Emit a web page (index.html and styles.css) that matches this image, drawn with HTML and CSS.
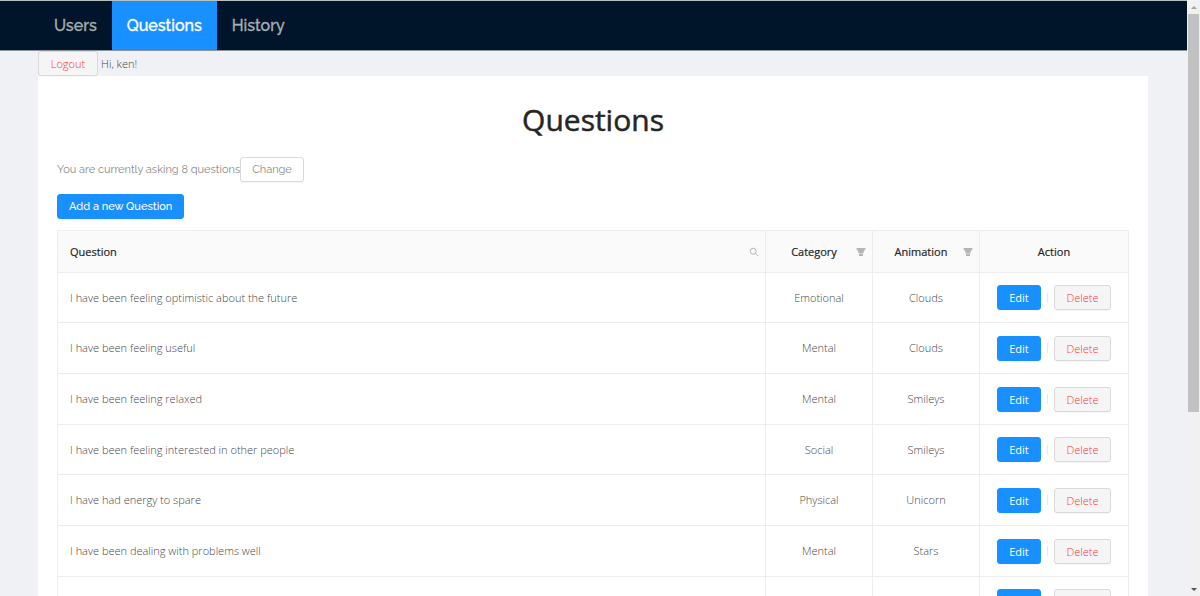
FILE: index.html
```
<!DOCTYPE html>
<html lang="en">
<head>
<meta charset="utf-8">
<title>Questions</title>
<link rel="stylesheet" href="styles.css">
</head>
<body>
<svg class="sprite" aria-hidden="true">
  <symbol id="funnel" viewBox="0 0 10 10"><path d="M.5 1h9v1L7.500 5v1.500h-5V5L.5 2zM3 7h4v2H3z" fill="currentColor"/></symbol>
</svg>
<div class="page">
  <nav class="nav">
    <a class="nav-link" href="#users">Users</a>
    <a class="nav-link active" href="#questions">Questions</a>
    <a class="nav-link" href="#history">History</a>
  </nav>
  <div class="container">
    <div class="account"><button class="btn danger logout">Logout</button><span>Hi, ken!</span></div>
    <main class="card">
      <h1 class="title">Questions</h1>
      <div class="asking"><span>You are currently asking 8 questions</span><button class="btn change">Change</button></div>
      <button class="btn primary add">Add a new Question</button>
      <table class="table">
        <colgroup><col><col class="col-tag"><col class="col-tag"><col class="col-action"></colgroup>
        <thead>
          <tr>
            <th class="text"><div class="head"><span>Question</span><button class="icon" aria-label="Search"><svg viewBox="0 0 10 10" width="10" height="10"><circle cx="4.200" cy="4.200" r="3" fill="none" stroke="currentColor"/><path d="M6.400 6.400 9.200 9.200" stroke="currentColor"/></svg></button></div></th>
            <th><div class="head"><span class="label">Category</span><button class="icon" aria-label="Filter category"><svg width="10" height="10"><use href="#funnel"/></svg></button></div></th>
            <th><div class="head"><span class="label">Animation</span><button class="icon" aria-label="Filter animation"><svg width="10" height="10"><use href="#funnel"/></svg></button></div></th>
            <th>Action</th>
          </tr>
        </thead>
        <tbody>
          <tr><td class="text">I have been feeling optimistic about the future</td><td>Emotional</td><td>Clouds</td><td><div class="actions"><button class="btn primary">Edit</button><i class="divider"></i><button class="btn danger">Delete</button></div></td></tr>
          <tr><td class="text">I have been feeling useful</td><td>Mental</td><td>Clouds</td><td><div class="actions"><button class="btn primary">Edit</button><i class="divider"></i><button class="btn danger">Delete</button></div></td></tr>
          <tr><td class="text">I have been feeling relaxed</td><td>Mental</td><td>Smileys</td><td><div class="actions"><button class="btn primary">Edit</button><i class="divider"></i><button class="btn danger">Delete</button></div></td></tr>
          <tr><td class="text">I have been feeling interested in other people</td><td>Social</td><td>Smileys</td><td><div class="actions"><button class="btn primary">Edit</button><i class="divider"></i><button class="btn danger">Delete</button></div></td></tr>
          <tr><td class="text">I have had energy to spare</td><td>Physical</td><td>Unicorn</td><td><div class="actions"><button class="btn primary">Edit</button><i class="divider"></i><button class="btn danger">Delete</button></div></td></tr>
          <tr><td class="text">I have been dealing with problems well</td><td>Mental</td><td>Stars</td><td><div class="actions"><button class="btn primary">Edit</button><i class="divider"></i><button class="btn danger">Delete</button></div></td></tr>
          <tr><td class="text"></td><td></td><td></td><td><div class="actions"><button class="btn primary" aria-label="Edit"></button><i class="divider"></i><button class="btn danger" aria-label="Delete"></button></div></td></tr>
        </tbody>
      </table>
    </main>
  </div>
</div>
<div class="scrollbar" aria-hidden="true">
  <svg class="arrow up" viewBox="0 0 6 3" width="6" height="3"><path d="M0 3 3 0l3 3z" fill="currentColor"/></svg>
  <div class="track"><div class="thumb"></div></div>
  <svg class="arrow" viewBox="0 0 6 3" width="6" height="3"><path d="M0 0h6L3 3z" fill="currentColor"/></svg>
</div>
</body>
</html>
```
FILE: styles.css
```
* { box-sizing: border-box; }
body {
  margin: 0;
  height: 100vh;
  display: flex;
  overflow: hidden;
  background: #eff1f5;
  color: #484848;
  font: 11px/16px "Open Sans", "Noto Sans", sans-serif;
  font-weight: 300;
}
.sprite { position: absolute; width: 0; height: 0; }
.page { flex: 1; min-width: 0; overflow: hidden; }
.nav {
  display: flex;
  height: 51px;
  padding-left: 39px;
  background: #001529;
  border-top: 1px solid #b9c0c2;
  border-bottom: 1px solid #8b929c;
}
.nav-link {
  padding: 0 15px;
  color: #a6adb4;
  font: 500 16px/50px Raleway, Lato, sans-serif;
  -webkit-text-stroke: 0.3px currentColor;
  text-decoration: none;
}
.nav-link.active { background: #1890ff; color: #fff; }
.container { padding: 0 39px 0 38px; }
.account { display: flex; align-items: center; gap: 3px; }
.btn {
  height: 25px;
  min-width: 44px;
  padding: 0 11px;
  border: 1px solid #d9d9d9;
  border-radius: 3px;
  background: #fff;
  color: #8a8a8a;
  font: inherit;
  line-height: 23px;
  white-space: nowrap;
  box-shadow: 0 1px 1px rgba(0, 0, 0, .03);
}
.btn.danger { min-width: 57px; background: #f5f5f5; color: #f5383b; }
.btn.logout { min-width: 60px; }
.btn.primary { background: #1890ff; border-color: #1890ff; color: #fff; font-weight: 500; }
.card { background: #fff; padding: 24px 19px; }
.title {
  margin: 0 0 17px;
  color: #262626;
  font-size: 30px;
  line-height: 40px;
  font-weight: 500;
  -webkit-text-stroke: 0.5px currentColor;
  text-align: center;
}
.asking { display: flex; align-items: center; margin-bottom: 12px; font-weight: 400; color: #8a8a8a; }
.asking, .btn.add { font-family: Raleway, Lato, sans-serif; font-size: 11px; }
.btn.add { display: block; margin-bottom: 11px; }
.table {
  width: 100%;
  table-layout: fixed;
  border-collapse: collapse;
}
.col-tag { width: 107px; }
.col-action { width: 149px; }
.table th, .table td {
  padding: 0 12px;
  border: 1px solid #ededed;
  text-align: center;
}
.table th { height: 42px; background: #fafafa; color: #262626; font-weight: 500; -webkit-text-stroke: 0.2px currentColor; }
.table tbody tr { height: 51px; }
.table tbody tr:nth-child(3n+1) { height: 50px; }
.table .text { text-align: left; }
.head { display: flex; align-items: center; justify-content: space-between; margin-right: -6px; }
.head .label { flex: 1; padding-right: 6px; }
.icon { display: flex; padding: 0; border: 0; background: none; color: #b5b5b5; }
.actions { display: flex; align-items: center; justify-content: center; }
.divider { width: 1px; height: 10px; margin: 0 6px; background: #e8e8e8; }
.scrollbar {
  display: flex;
  flex-direction: column;
  align-items: center;
  width: 13px;
  padding: 6px 0 5px;
  background: #f1f1f1;
  color: #505050;
}
.up { color: #a3a3a3; }
.track { flex: 1; width: 11px; margin: 5px 0; }
.thumb { height: 70%; background: #c1c1c1; }
```
